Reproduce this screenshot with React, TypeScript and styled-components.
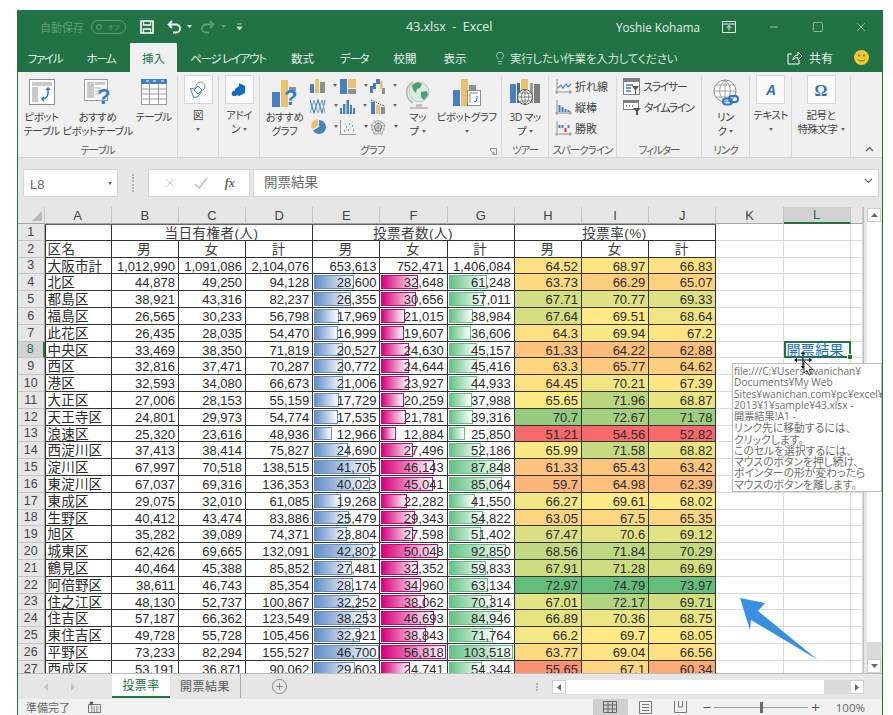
import React from 'react';
import styled, { createGlobalStyle } from 'styled-components';
import { CirclePlus, Lightbulb, Minus, Square, X } from 'lucide-react';

const UI_FONT = `"Open Sans", "Noto Sans CJK JP", sans-serif`;
const CELL_FONT = `"Liberation Sans", "Noto Sans CJK JP", sans-serif`;

const GlobalStyle = createGlobalStyle`
  html, body {
    margin: 0;
    height: 715px;
    overflow: hidden;
    background: #ffffff;
  }
  #root {
    padding: 10px 0 0 17px;
  }
`;

const Excel = styled.div`
  position: relative;
  box-sizing: border-box;
  width: 866px;
  height: 705px;
  display: flex;
  flex-direction: column;
  overflow: hidden;
  background: #e6e6e6;
  border-left: 1px solid #217346;
  border-right: 1px solid #217346;
  font-family: ${UI_FONT};
  font-feature-settings: 'palt';
`;

/* title bar */
const TitleBar = styled.div`
  height: 33px;
  flex: none;
  display: flex;
  align-items: center;
  background: #217346;
  color: #e4efe8;
  font-size: 12px;
`;

const AutoSave = styled.span`
  margin-left: 22px;
  width: 45px;
  color: #5e9f7b;
  font-size: 11px;
  white-space: nowrap;
`;

const Toggle = styled.span`
  box-sizing: border-box;
  margin-left: 6px;
  width: 35px;
  height: 14px;
  padding-left: 4px;
  display: flex;
  align-items: center;
  gap: 5px;
  border: 1px solid #5e9f7b;
  border-radius: 8px;
  color: #5e9f7b;
  font-size: 7px;

  &::before {
    content: '';
    width: 6px;
    height: 6px;
    border-radius: 50%;
    background: #217346;
    border: 1px solid #5e9f7b;
    box-sizing: border-box;
  }
`;

const QuickIcon = styled.svg<{ $left: number }>`
  flex: none;
  margin-left: ${(p) => p.$left}px;
`;

const DocTitle = styled.span`
  position: absolute;
  left: 388px;
  top: 0;
  line-height: 33px;
  white-space: pre;
  font-size: 12.5px;
`;

const UserName = styled.span`
  margin-left: auto;
  white-space: nowrap;
  font-size: 11.7px;
`;

const WinButton = styled.span<{ $left: number }>`
  margin-left: ${(p) => p.$left}px;
  display: flex;
  color: #f2f7f4;
`;

/* tab row */
const TabRow = styled.div`
  height: 29px;
  flex: none;
  display: flex;
  align-items: stretch;
  background: #217346;
  color: #e6f0ea;
  font-size: 11.5px;
`;

const Tab = styled.div<{ $w: number; $active?: boolean; $kana?: boolean }>`
  width: ${(p) => p.$w}px;
  display: flex;
  align-items: center;
  justify-content: center;
  white-space: nowrap;
  letter-spacing: ${(p) => (p.$kana ? '-1.3px' : '0')};
  background: ${(p) => (p.$active ? '#f0f0f0' : 'transparent')};
  color: ${(p) => (p.$active ? '#217346' : 'inherit')};
`;

const TellMe = styled.div`
  margin-left: 11px;
  display: flex;
  align-items: center;
  gap: 3px;
  white-space: nowrap;
  letter-spacing: -0.25px;
  color: #d4e5da;
`;

const Share = styled.div`
  margin-left: auto;
  display: flex;
  align-items: center;
  gap: 6px;
  font-size: 12px;
`;

const Smile = styled.svg`
  margin: auto 13px auto 21px;
`;

/* ribbon */
const Ribbon = styled.div`
  height: 86px;
  flex: none;
  box-sizing: border-box;
  padding-top: 4px;
  display: flex;
  background: #f0f0f0;
  border-bottom: 1px solid #d6d6d6;
  color: #444444;
  font-size: 10.5px;
  line-height: 14px;
`;

const Group = styled.div<{ $w: number }>`
  position: relative;
  box-sizing: border-box;
  width: ${(p) => p.$w}px;
  height: 81px;
  flex: none;
  display: flex;
  flex-direction: column;
  border-right: 1px solid #d9d9d9;
`;

const GroupBody = styled.div`
  height: 67px;
  flex: none;
  display: flex;
  justify-content: center;
`;

const GroupLabel = styled.div<{ $inset?: number }>`
  padding-right: ${(p) => p.$inset ?? 0}px;
  text-align: center;
  color: #5a5a5a;
  white-space: nowrap;
  letter-spacing: -1px;
  line-height: 14px;
`;

const Launcher = styled.svg`
  position: absolute;
  right: 4px;
  bottom: 2px;
`;

const BigButton = styled.div<{ $w?: number }>`
  width: ${(p) => (p.$w ? `${p.$w}px` : '100%')};
  flex: none;
  display: flex;
  flex-direction: column;
  align-items: center;
  text-align: center;
  white-space: nowrap;
  letter-spacing: -0.5px;
`;

const ButtonText = styled.div`
  line-height: 14px;
`;

const IconSlot = styled.div`
  height: 31px;
  padding-top: 3px;
  display: flex;
  align-items: flex-start;
  justify-content: center;
`;

const Boxed = styled.div`
  box-sizing: border-box;
  width: 29px;
  height: 29px;
  margin: -1px 0 4px;
  display: flex;
  align-items: center;
  justify-content: center;
  background: #fbfbfb;
  border: 1px solid #d8d8d8;
`;

const Caret = styled.span<{ $inline?: boolean }>`
  display: ${(p) => (p.$inline ? 'inline-block' : 'block')};
  width: 0;
  height: 0;
  margin: ${(p) => (p.$inline ? '0 0 2px 3px' : '6px 0 0')};
  vertical-align: middle;
  border-left: 2.5px solid transparent;
  border-right: 2.5px solid transparent;
  border-top: 3px solid #666666;
`;

const ChartGrid = styled.div`
  width: 90px;
  flex: none;
  display: grid;
  grid-template-columns: repeat(3, 30px);
  grid-auto-rows: 20.5px;
`;

const ChartCell = styled.div`
  display: flex;
  align-items: center;
  gap: 5px;
`;

const SmallList = styled.div`
  width: 100%;
  padding-left: 6px;
  display: flex;
  flex-direction: column;
`;

const SmallButton = styled.div<{ $kana?: boolean }>`
  height: 21px;
  display: flex;
  align-items: center;
  gap: 3px;
  white-space: nowrap;
  font-size: 11px;
  letter-spacing: ${(p) => (p.$kana ? '-1.4px' : '0')};
`;

const Collapse = styled.svg`
  margin: auto 0 5px 14px;
`;

/* formula bar */
const FormulaBar = styled.div`
  height: 49px;
  flex: none;
  box-sizing: border-box;
  padding: 11px 3px 10px 5px;
  display: flex;
  background: #e6e6e6;
  color: #6a6a6a;
  font-family: ${CELL_FONT};
`;

const NameBox = styled.div`
  box-sizing: border-box;
  width: 95px;
  display: flex;
  align-items: center;
  justify-content: space-between;
  padding: 3px 5px 0 6px;
  background: #ffffff;
  border: 1px solid #d6d6d6;
  font-size: 13px;
`;

const Grip = styled.div`
  width: 30px;
  display: flex;
  flex-direction: column;
  align-items: center;
  justify-content: center;
  gap: 2px;

  &::before,
  &::after {
    content: '';
    width: 2px;
    height: 8px;
    background: repeating-linear-gradient(#b5b5b5 0 2px, transparent 2px 3px);
  }
`;

const FxBox = styled.div`
  box-sizing: border-box;
  width: 102px;
  display: flex;
  align-items: center;
  justify-content: space-around;
  padding: 0 6px;
  background: #ffffff;
  border: 1px solid #d6d6d6;
`;

const FxText = styled.span`
  font-family: 'Liberation Serif', serif;
  font-style: italic;
  font-weight: bold;
  font-size: 12px;
  color: #666666;
`;

const FormulaInput = styled.div`
  box-sizing: border-box;
  flex: 1;
  margin-left: 3px;
  padding: 0 5px 4px 10px;
  display: flex;
  align-items: center;
  justify-content: space-between;
  background: #ffffff;
  border: 1px solid #d6d6d6;
  font-size: 13.5px;
`;

/* sheet */
const SheetRow = styled.div`
  height: 466px;
  flex: none;
  display: flex;
`;

const Sheet = styled.div`
  flex: 1;
  min-width: 0;
  overflow: hidden;
  display: grid;
  grid-template-columns: 26.5px repeat(12, 67.2px) 1fr;
  grid-template-rows: 17px;
  grid-auto-rows: 16.8px;
  background: #ffffff;
  border-right: 1px solid #bdbdbd;
  font-family: ${CELL_FONT};
  font-feature-settings: normal;
  font-size: 13px;
  color: #2b2b2b;
`;

const Corner = styled.div`
  display: flex;
  align-items: flex-end;
  justify-content: flex-end;
  padding: 0 2px 2px 0;
  background: #e6e6e6;
  border-right: 1px solid #c6c6c6;
  border-bottom: 1px solid #a6a6a6;

  &::after {
    content: '';
    border-left: 10px solid transparent;
    border-bottom: 10px solid #b8b8b8;
  }
`;

const ColHead = styled.div<{ $on?: boolean }>`
  box-sizing: border-box;
  display: flex;
  align-items: center;
  justify-content: center;
  background: ${(p) => (p.$on ? '#d2d2d2' : '#e6e6e6')};
  color: ${(p) => (p.$on ? '#217346' : '#444444')};
  border-right: 1px solid #c6c6c6;
  border-bottom: ${(p) => (p.$on ? '2px solid #217346' : '1px solid #a6a6a6')};
`;

const RowHead = styled.div<{ $on?: boolean }>`
  box-sizing: border-box;
  display: flex;
  align-items: center;
  justify-content: center;
  font-size: 12.5px;
  background: ${(p) => (p.$on ? '#d2d2d2' : '#e6e6e6')};
  color: ${(p) => (p.$on ? '#217346' : '#444444')};
  border-bottom: 1px solid #c6c6c6;
  border-right: ${(p) => (p.$on ? '2px solid #217346' : '1px solid #a6a6a6')};
`;

const Cell = styled.div<{ $span?: number; $first?: boolean; $top?: boolean; $right?: boolean; $center?: boolean }>`
  position: relative;
  box-sizing: border-box;
  grid-column: span ${(p) => p.$span ?? 1};
  padding: 1px 3px 0 2px;
  line-height: 15px;
  white-space: nowrap;
  text-align: ${(p) => (p.$center ? 'center' : p.$right ? 'right' : 'left')};
  border-right: 1px solid #333333;
  border-bottom: 1px solid #333333;
  border-left: ${(p) => (p.$first ? '1px solid #333333' : 'none')};
  border-top: ${(p) => (p.$top ? '1px solid #666666' : 'none')};
`;

const NameCell = styled(Cell)`
  font-size: 13.5px;
  letter-spacing: 0.2px;
`;

const HeadCell = styled(Cell)`
  font-size: 13.5px;
  letter-spacing: 0.5px;
  color: #3c3c3c;
`;

const BarCell = styled(Cell)`
  overflow: hidden;
`;

const BarFill = styled.span<{ $color: string }>`
  position: absolute;
  left: 1px;
  top: 1px;
  bottom: 1px;
  box-sizing: border-box;
  border: 1px solid ${(p) => p.$color};
  background: linear-gradient(to right, ${(p) => p.$color}, #ffffff);
`;

const BarText = styled.span`
  position: relative;
`;

const Blank = styled.div`
  position: relative;
  box-sizing: border-box;
  border-right: 1px solid #dcdcdc;
  border-bottom: 1px solid #dcdcdc;
`;

const Selected = styled.div`
  box-sizing: border-box;
  position: relative;
  z-index: 1;
  padding: 0 0 0 1px;
  border: 2px solid #217346;
  margin-top: -1px;
  line-height: 14px;
  font-size: 14px;
  letter-spacing: 0.3px;
  color: #1f6fc4;
  white-space: nowrap;

  &::after {
    content: '';
    position: absolute;
    right: -4px;
    bottom: -4px;
    width: 6px;
    height: 6px;
    background: #217346;
    border: 1px solid #ffffff;
    box-sizing: border-box;
  }
`;

const VScroll = styled.div`
  width: 18px;
  flex: none;
  box-sizing: border-box;
  padding: 1px 1px 0 3px;
  display: flex;
  flex-direction: column;
  background: #e6e6e6;
`;

const ScrollCap = styled.div`
  height: 14px;
  flex: none;
  box-sizing: border-box;
  display: flex;
  align-items: center;
  justify-content: center;
  background: #ffffff;
  border: 1px solid #cfcfcf;
`;

const ScrollThumb = styled.div`
  height: 420px;
  flex: none;
  background: #ffffff;
`;

const ScrollTrack = styled.div`
  flex: 1;
  background: #dadada;
`;

/* sheet tabs and the horizontal scroll bar */
const TabStrip = styled.div`
  height: 26px;
  flex: none;
  box-sizing: border-box;
  display: flex;
  background: #e6e6e6;
  border-top: 1px solid #bdbdbd;
  color: #5a5a5a;
  font-size: 12px;
`;

const SheetNav = styled.div`
  width: 94px;
  flex: none;
  padding-left: 26px;
  box-sizing: border-box;
  display: flex;
  align-items: center;
  gap: 23px;
`;

const NavArrow = styled.span<{ $dir: 'left' | 'right' }>`
  width: 0;
  height: 0;
  border-top: 4px solid transparent;
  border-bottom: 4px solid transparent;
  ${(p) => (p.$dir === 'left' ? 'border-right: 4px solid #c2c2c2;' : 'border-left: 4px solid #c2c2c2;')}
`;

const SheetTab = styled.div<{ $w: number; $active?: boolean }>`
  width: ${(p) => p.$w}px;
  flex: none;
  box-sizing: border-box;
  height: 24px;
  display: flex;
  align-items: center;
  justify-content: center;
  letter-spacing: 0.5px;
  background: ${(p) => (p.$active ? '#ffffff' : 'transparent')};
  color: ${(p) => (p.$active ? '#217346' : 'inherit')};
  border-bottom: ${(p) => (p.$active ? '2px solid #217346' : 'none')};
  border-right: ${(p) => (p.$active ? 'none' : '1px solid #a9a9a9')};
`;

const AddSheet = styled.div`
  margin-left: 30px;
  display: flex;
  align-items: center;
  color: #7a7a7a;
`;

const HScrollArea = styled.div`
  margin: 6px 18px 0 auto;
  height: 14px;
  display: flex;
  align-items: center;
`;

const HGrip = styled.div`
  width: 2px;
  height: 9px;
  margin-right: 14px;
  background: repeating-linear-gradient(#b5b5b5 0 2px, transparent 2px 3px);
`;

const HCap = styled(ScrollCap)`
  width: 14px;
`;

const HThumb = styled.div`
  width: 258px;
  height: 14px;
  background: #ffffff;
`;

const HTrack = styled.div`
  width: 26px;
  height: 14px;
  background: #dadada;
`;

/* status bar */
const StatusBar = styled.div`
  flex: 1;
  display: flex;
  align-items: center;
  background: #f1f1f1;
  color: #666666;
  font-size: 11px;
`;

const StatusText = styled.span`
  margin-left: 8px;
  width: 62px;
  white-space: nowrap;
`;

const ViewButton = styled.div<{ $on?: boolean; $first?: boolean }>`
  width: 35px;
  height: 16px;
  margin-left: ${(p) => (p.$first ? 'auto' : '0')};
  display: flex;
  align-items: center;
  justify-content: center;
  background: ${(p) => (p.$on ? '#d0d0d0' : 'transparent')};
`;

const Zoomer = styled.div`
  margin-left: 5px;
  display: flex;
  align-items: center;
  gap: 3px;
  color: #555555;
  font-size: 15px;
  line-height: 14px;
`;

const ZoomLine = styled.div`
  position: relative;
  width: 94px;
  height: 1px;
  background: #9a9a9a;

  &::after {
    content: '';
    position: absolute;
    left: 46px;
    top: -5px;
    width: 3px;
    height: 11px;
    background: #6a6a6a;
  }
`;

const ZoomValue = styled.span`
  margin: 0 17px 0 16px;
  font-size: 11.5px;
`;

/* things that float over the sheet */
const Tooltip = styled.div`
  position: absolute;
  left: 714px;
  top: 353px;
  width: 150px;
  height: 129px;
  box-sizing: border-box;
  padding: 2px 0 0 1px;
  background: #ffffff;
  border: 1px solid #bdbdbd;
  color: #6f6f6f;
  font-size: 10.2px;
  line-height: 11.25px;
  white-space: pre;
`;

const TooltipKana = styled.div`
  font-family: 'Noto Sans CJK JP', sans-serif;
  font-size: 10.8px;
  line-height: 11.25px;
`;

const Overlay = styled.svg`
  position: absolute;
  left: 0;
  top: 0;
  pointer-events: none;
`;

const QMark = styled.text`
  font-family: 'Liberation Sans', sans-serif;
  font-weight: bold;
  fill: #2b7cd3;
`;

const BLUE = '#4a7fbd';
const ORANGE = '#ecc16e';
const GRAY = '#8f8f8f';

function Icon({ w = 26, h = 26, children }: { w?: number; h?: number; children: React.ReactNode }) {
  return (
    <svg width={w} height={h} viewBox={`0 0 ${w} ${h}`}>
      {children}
    </svg>
  );
}

const PivotIcon = () => (
  <Icon>
    <rect x=".5" y=".5" width="25" height="25" fill="#fff" stroke="#8c8c8c" />
    <rect x="3" y="3" width="20" height="4" fill="#c9c9c9" />
    <rect x="3" y="8" width="6" height="15" fill="#c9c9c9" />
    <path d="M19 9v5a6 6 0 0 1-6 6M17 11l2-2 2 2M15 18l-2 2 2 2" fill="none" stroke="#2b79c2" strokeWidth="1.4" />
  </Icon>
);

const RecommendPivotIcon = () => (
  <Icon w={28} h={31}>
    <rect x=".5" y=".5" width="23" height="21" fill="#fff" stroke="#9a9a9a" />
    <rect x="3" y="3" width="7" height="16" fill="#c9c9c9" />
    <rect x="11" y="3" width="10" height="3" fill="#c9c9c9" />
    <path d="M11 9h6M11 12h5M11 15h5" stroke="#c9c9c9" strokeWidth="1.5" />
    <QMark x="13" y="25" fontSize="22">?</QMark>
  </Icon>
);

const TableIcon = () => (
  <Icon>
    <rect x=".5" y=".5" width="25" height="25" fill="#fff" stroke="#9a9a9a" />
    <rect x="0" y="0" width="26" height="5" fill="#3f7fc4" />
    <path d="M5 2h3M12 2h3M20 2h3" stroke="#fff" strokeWidth="1.2" />
    <path d="M0 10h26M0 15h26M0 20h26M8.500 5v21M17.500 5v21" stroke="#9a9a9a" />
  </Icon>
);

const PictureIcon = () => (
  <Icon w={17} h={17}>
    <path d="M1 7h7l3 5-4 4H3z" fill="none" stroke="#4a8fd4" strokeWidth="1.1" transform="rotate(-8 6 11)" />
    <circle cx="10.500" cy="5.500" r="4.500" fill="#fff" stroke="#8a8a8a" />
    <path d="M4 9l4-4 4 4-4 4z" fill="#fff" stroke="#3f86cf" />
  </Icon>
);

const AddinIcon = () => (
  <Icon w={16} h={16}>
    <path d="M8 1l6 3v7l-6 3-4-2V7l4-3z" fill="#0f6cbd" />
    <circle cx="3.500" cy="11.500" r="2.800" fill="#0f6cbd" />
  </Icon>
);

const RecommendChartIcon = () => (
  <Icon w={28} h={31}>
    <rect x="1" y="13" width="8" height="15" fill={BLUE} />
    <rect x="10" y="1" width="7" height="27" fill={ORANGE} />
    <rect x="18" y="8" width="7" height="4" fill={GRAY} />
    <QMark x="13" y="26" fontSize="22">?</QMark>
  </Icon>
);

const BarsIcon = () => (
  <Icon w={15} h={14}>
    <rect x="0" y="5" width="4" height="9" fill={BLUE} />
    <rect x="5" y="0" width="4" height="14" fill={ORANGE} />
    <rect x="10" y="3" width="5" height="11" fill={GRAY} />
  </Icon>
);

const TreemapIcon = () => (
  <Icon w={16} h={15}>
    <rect x="0" y="0" width="7" height="15" fill={BLUE} />
    <rect x="8" y="0" width="8" height="9" fill={ORANGE} />
    <rect x="8" y="10" width="8" height="5" fill={GRAY} />
  </Icon>
);

const WaterfallIcon = () => (
  <Icon w={15} h={15}>
    <rect x="0" y="7" width="3" height="7" fill={BLUE} />
    <rect x="3" y="4" width="3" height="6" fill={BLUE} />
    <rect x="6" y="0" width="4" height="5" fill={BLUE} />
    <rect x="10" y="2" width="2.500" height="8" fill={ORANGE} />
    <rect x="12" y="9" width="3" height="6" fill={GRAY} />
  </Icon>
);

const StockIcon = () => (
  <Icon w={16} h={15}>
    <path d="M0 1l4 13 4-13 4 13 3-13" fill="none" stroke={BLUE} strokeWidth="1.100" />
    <path d="M0 14l4-13 4 13 4-13 3 13" fill="none" stroke="#6ea5da" strokeWidth="1" />
  </Icon>
);

const HistogramIcon = () => (
  <Icon w={15} h={14}>
    <rect x="0" y="8" width="2" height="6" fill={BLUE} />
    <rect x="3" y="4" width="2.500" height="10" fill={BLUE} />
    <rect x="6.500" y="0" width="2.500" height="14" fill={BLUE} />
    <rect x="10" y="5" width="2" height="9" fill={BLUE} />
    <rect x="13" y="8" width="2" height="6" fill={BLUE} />
  </Icon>
);

const ComboIcon = () => (
  <Icon w={15} h={15}>
    <rect x="1" y="3" width="4" height="12" fill={BLUE} />
    <rect x="6" y="6" width="4" height="9" fill={ORANGE} />
    <rect x="11" y="8" width="4" height="7" fill={GRAY} />
    <path d="M1 1l5 2 5 3 4 1" fill="none" stroke="#555" strokeWidth="1" strokeDasharray="1.500 1" />
  </Icon>
);

const PieIcon = () => (
  <Icon w={16} h={16}>
    <path d="M9 1a7 7 0 0 1 0 14 7 7 0 0 1-6-3.500L9 8z" fill={BLUE} />
    <path d="M8 0v7L2 10a7 7 0 0 1 6-10z" fill={ORANGE} />
  </Icon>
);

const ScatterIcon = () => (
  <Icon w={16} h={15}>
    <path d="M.500 0v14.500H16" fill="none" stroke="#9a9a9a" />
    <path d="M4 11h1M6 7h1M8 10h1M9 4h1M12 6h1M13 10h1" stroke="#4a8fd4" strokeWidth="1.500" />
    <path d="M5 4h1M10 8h1M12 2h1" stroke={ORANGE} strokeWidth="1.500" />
  </Icon>
);

const RadarIcon = () => (
  <Icon w={16} h={15}>
    <path d="M8 0l7 5-3 9H4L1 5zM8 0v14M1 5l14 5M15 5L1 10M4 14l8-14M12 14L4 0" fill="none" stroke="#9a9a9a" strokeWidth=".8" />
    <path d="M8 3l4 3-2 5H6L4 6z" fill="none" stroke="#777" strokeWidth="1" />
  </Icon>
);

const MapIcon = () => (
  <Icon w={24} h={31}>
    <path d="M7 3a12 12 0 0 0 0 21" fill="none" stroke="#b5b5b5" strokeWidth="1.600" />
    <circle cx="13" cy="13" r="10" fill="#d6ebe3" stroke="#c4c4c4" />
    <path d="M6 6l6-3 4 2-2 4-3 1-1 4-3-3zM15 13l6-1 1 4-4 5-3-3z" fill="#4f9c74" />
    <path d="M10 25h6v3h-6zM4 28h18v2H4z" fill="#c2c2c2" />
  </Icon>
);

const PivotChartIcon = () => (
  <Icon w={28} h={28}>
    <rect x="0" y="11" width="7" height="16" fill={BLUE} />
    <rect x="8" y="0" width="7" height="27" fill={ORANGE} />
    <rect x="16" y="6" width="7" height="5" fill={GRAY} />
    <rect x="14.500" y="11.500" width="13" height="15" fill="#fff" stroke="#8c8c8c" />
    <path d="M17 14h8M17 14v10" stroke="#c2c2c2" strokeWidth="2" />
    <path d="M24 17v3a3 3 0 0 1-3 3" fill="none" stroke="#2b79c2" />
  </Icon>
);

const Map3dIcon = () => (
  <Icon w={30} h={28}>
    <rect x="0" y="5" width="6" height="19" fill={BLUE} />
    <rect x="7" y="4" width="3" height="20" fill="#3b6ca6" />
    <rect x="11" y="0" width="7" height="15" fill={ORANGE} />
    <rect x="20" y="4" width="3" height="20" fill="#9a9a9a" />
    <rect x="24" y="5" width="6" height="19" fill="#7e7e7e" />
    <circle cx="15" cy="18" r="7.500" fill="#fff" stroke="#555" />
    <path d="M8 18h14M15 11v14M10 14h10M10 22h10M15 11c-5 4-5 10 0 14M15 11c5 4 5 10 0 14" fill="none" stroke="#555" strokeWidth=".7" />
  </Icon>
);

const SparkAxes = () => (
  <path d="M2 0v15M0 13h17M15 11v4" fill="none" stroke="#8f8f8f" />
);

const SparkLineIcon = () => (
  <Icon w={17} h={15}>
    <SparkAxes />
    <path d="M3 9l3-3 2 3 3-4 2 3 3-3" fill="none" stroke={BLUE} strokeWidth="1.100" />
  </Icon>
);

const SparkColumnIcon = () => (
  <Icon w={17} h={15}>
    <SparkAxes />
    <path d="M4.500 12V5M7.500 12V7M10.500 12V9M13.500 12v-2" stroke={BLUE} strokeWidth="2" />
  </Icon>
);

const SparkWinIcon = () => (
  <Icon w={17} h={15}>
    <SparkAxes />
    <path d="M4.500 4v3M7.500 4v3M13.500 4v3" stroke={BLUE} strokeWidth="2" />
    <path d="M10.500 7v4" stroke="#d6402f" strokeWidth="2" />
  </Icon>
);

const SlicerIcon = () => (
  <Icon w={17} h={17}>
    <rect x=".5" y=".5" width="16" height="16" fill="#fff" stroke="#7f7f7f" />
    <rect x="1" y="1" width="15" height="3" fill="#7f7f7f" />
    <path d="M3 7h7M3 10h5M3 13h5" stroke={BLUE} strokeWidth="1.500" />
    <path d="M9 8h7l-3 4v4h-1v-4z" fill="#555" />
  </Icon>
);

const TimelineIcon = () => (
  <Icon w={18} h={15}>
    <rect x=".5" y=".5" width="15" height="9" fill="#fff" stroke="#7f7f7f" />
    <rect x="1" y="1" width="14" height="2" fill="#7f7f7f" />
    <path d="M3 6h1M6 6h1M9 6h1" stroke={BLUE} strokeWidth="1.500" />
    <path d="M10 8h8l-3 3v4h-2v-4z" fill="#555" />
  </Icon>
);

const LinkIcon = () => (
  <Icon w={26} h={31}>
    <circle cx="12" cy="12" r="11" fill="#fff" stroke="#8f8f8f" />
    <path d="M1 12h22M12 1v22M3 6h18M3 18h18M12 1c-7 6-7 16 0 22M12 1c7 6 7 16 0 22" fill="none" stroke="#8f8f8f" strokeWidth=".8" />
    <rect x="10" y="19.500" width="9" height="6" rx="3" fill="none" stroke="#2b79c2" strokeWidth="2" />
    <rect x="16" y="17" width="9" height="6" rx="3" fill="none" stroke="#2b79c2" strokeWidth="2" />
  </Icon>
);

const TextAIcon = () => (
  <Icon w={16} h={16}>
    <text x="3" y="13" fontFamily="Liberation Sans, sans-serif" fontSize="14" fontWeight="bold" fontStyle="italic" fill="#2f73b8">A</text>
  </Icon>
);

const OmegaIcon = () => (
  <Icon w={16} h={16}>
    <text x="1.500" y="13.500" fontFamily="Liberation Serif, serif" fontSize="16" fontWeight="bold" fill="#2f73b8">Ω</text>
  </Icon>
);

type ChartRow = { icon: React.ReactNode };

const CHART_ICONS: ChartRow[] = [
  { icon: <BarsIcon /> },
  { icon: <TreemapIcon /> },
  { icon: <WaterfallIcon /> },
  { icon: <StockIcon /> },
  { icon: <HistogramIcon /> },
  { icon: <ComboIcon /> },
  { icon: <PieIcon /> },
  { icon: <ScatterIcon /> },
  { icon: <RadarIcon /> },
];

// 区名, 男, 女, 計, 投票者 男, 女, 計, 投票率 男, 女, 計
const ROWS: [string, string, string, string, string, string, string, number, number, number][] = [
  ['大阪市計', '1,012,990', '1,091,086', '2,104,076', '653,613', '752,471', '1,406,084', 64.52, 68.97, 66.83],
  ['北区', '44,878', '49,250', '94,128', '28,600', '32,648', '61,248', 63.73, 66.29, 65.07],
  ['都島区', '38,921', '43,316', '82,237', '26,355', '30,656', '57,011', 67.71, 70.77, 69.33],
  ['福島区', '26,565', '30,233', '56,798', '17,969', '21,015', '38,984', 67.64, 69.51, 68.64],
  ['此花区', '26,435', '28,035', '54,470', '16,999', '19,607', '36,606', 64.3, 69.94, 67.2],
  ['中央区', '33,469', '38,350', '71,819', '20,527', '24,630', '45,157', 61.33, 64.22, 62.88],
  ['西区', '32,816', '37,471', '70,287', '20,772', '24,644', '45,416', 63.3, 65.77, 64.62],
  ['港区', '32,593', '34,080', '66,673', '21,006', '23,927', '44,933', 64.45, 70.21, 67.39],
  ['大正区', '27,006', '28,153', '55,159', '17,729', '20,259', '37,988', 65.65, 71.96, 68.87],
  ['天王寺区', '24,801', '29,973', '54,774', '17,535', '21,781', '39,316', 70.7, 72.67, 71.78],
  ['浪速区', '25,320', '23,616', '48,936', '12,966', '12,884', '25,850', 51.21, 54.56, 52.82],
  ['西淀川区', '37,413', '38,414', '75,827', '24,690', '27,496', '52,186', 65.99, 71.58, 68.82],
  ['淀川区', '67,997', '70,518', '138,515', '41,705', '46,143', '87,848', 61.33, 65.43, 63.42],
  ['東淀川区', '67,037', '69,316', '136,353', '40,023', '45,041', '85,064', 59.7, 64.98, 62.39],
  ['東成区', '29,075', '32,010', '61,085', '19,268', '22,282', '41,550', 66.27, 69.61, 68.02],
  ['生野区', '40,412', '43,474', '83,886', '25,479', '29,343', '54,822', 63.05, 67.5, 65.35],
  ['旭区', '35,282', '39,089', '74,371', '23,804', '27,598', '51,402', 67.47, 70.6, 69.12],
  ['城東区', '62,426', '69,665', '132,091', '42,802', '50,048', '92,850', 68.56, 71.84, 70.29],
  ['鶴見区', '40,464', '45,388', '85,852', '27,481', '32,352', '59,833', 67.91, 71.28, 69.69],
  ['阿倍野区', '38,611', '46,743', '85,354', '28,174', '34,960', '63,134', 72.97, 74.79, 73.97],
  ['住之江区', '48,130', '52,737', '100,867', '32,252', '38,062', '70,314', 67.01, 72.17, 69.71],
  ['住吉区', '57,187', '66,362', '123,549', '38,253', '46,693', '84,946', 66.89, 70.36, 68.75],
  ['東住吉区', '49,728', '55,728', '105,456', '32,921', '38,843', '71,764', 66.2, 69.7, 68.05],
  ['平野区', '73,233', '82,294', '155,527', '46,700', '56,818', '103,518', 63.77, 69.04, 66.56],
  ['西成区', '53,191', '36,871', '90,062', '29,603', '24,741', '54,344', 55.65, 67.1, 60.34],
];

const COLUMNS = ['A', 'B', 'C', 'D', 'E', 'F', 'G', 'H', 'I', 'J', 'K', 'L', 'M'];
const BAR_COLORS = ['#638ec6', '#d6007b', '#63c384'];
const BAR_FULL = 64.5;

const TOOLTIP_PATH = [
  'file:///C:¥Users¥wanichan¥',
  'Documents¥My Web',
  'Sites¥wanichan.com¥pc¥excel¥',
  '2013¥1¥sample¥43.xlsx -',
  '開票結果!A1 -',
].join('\n');

const TOOLTIP_HINT = [
  'リンク先に移動するには、',
  'クリックします。',
  'このセルを選択するには、',
  'マウスのボタンを押し続け、',
  'ポインターの形が変わったら',
  'マウスのボタンを離します。',
].join('\n');

const num = (s: string) => Number(s.replace(/,/g, ''));

function mix(a: number[], b: number[], t: number): string {
  return `rgb(${a.map((v, i) => Math.round(v + (b[i] - v) * t)).join(',')})`;
}

// Excel's red / yellow / green scale, one per column, pivoted on the median
function scaleColor(value: number, column: number[]): string {
  const sorted = [...column].sort((x, y) => x - y);
  const low = sorted[0];
  const high = sorted[sorted.length - 1];
  const mid = sorted[Math.floor(sorted.length / 2)];
  const red = [248, 105, 107];
  const yellow = [255, 235, 132];
  const green = [99, 190, 123];
  if (value <= mid) return mix(red, yellow, (value - low) / (mid - low));
  return mix(yellow, green, (value - mid) / (high - mid));
}

const RATE_COLUMNS = [7, 8, 9].map((i) => ROWS.map((r) => r[i] as number));
const BAR_MAX = [4, 5, 6].map((i) => Math.max(...ROWS.slice(1).map((r) => num(r[i] as string))));

function TrailingBlanks({ selected }: { selected?: boolean }) {
  return (
    <>
      <Blank />
      {selected ? <Selected>開票結果</Selected> : <Blank />}
      <Blank />
    </>
  );
}

function DataRows() {
  return (
    <>
      {ROWS.map((row, r) => {
        const rowNumber = r + 3;
        return (
          <React.Fragment key={rowNumber}>
            <RowHead $on={rowNumber === 8}>{rowNumber}</RowHead>
            <NameCell $first>{row[0]}</NameCell>
            {row.slice(1, 4).map((v, i) => (
              <Cell $right key={i}>{v}</Cell>
            ))}
            {row.slice(4, 7).map((v, i) => (
              <BarCell $right key={i}>
                {r > 0 && (
                  <BarFill
                    $color={BAR_COLORS[i]}
                    style={{ width: (num(v as string) / BAR_MAX[i]) * BAR_FULL }}
                  />
                )}
                <BarText>{v}</BarText>
              </BarCell>
            ))}
            {row.slice(7).map((v, i) => (
              <Cell
                $right
                key={i}
                style={{ background: scaleColor(v as number, RATE_COLUMNS[i]) }}
              >
                {v}
              </Cell>
            ))}
            <TrailingBlanks selected={rowNumber === 8} />
          </React.Fragment>
        );
      })}
    </>
  );
}

export default function App(): JSX.Element {
  return (
    <>
      <GlobalStyle />
      <Excel>
        <TitleBar>
          <AutoSave>自動保存</AutoSave>
          <Toggle>オフ</Toggle>
          <QuickIcon $left={14} width="14" height="14" viewBox="0 0 14 14">
            <path d="M1 1h12v12H1z" fill="none" stroke="#fff" strokeWidth="1.600" />
            <path d="M3.500 1v4h7V1M3.500 13V9h7v4" fill="none" stroke="#fff" strokeWidth="1.300" />
          </QuickIcon>
          <QuickIcon $left={13} width="15" height="14" viewBox="0 0 15 14">
            <path d="M5 1L1.500 4.500 5 8M1.500 4.500H9a4 4 0 0 1 0 8H6" fill="none" stroke="#fff" strokeWidth="1.800" />
          </QuickIcon>
          <QuickIcon $left={4} width="7" height="4" viewBox="0 0 7 4">
            <path d="M1 0h5L3.500 3z" fill="#e8f1ec" />
          </QuickIcon>
          <QuickIcon $left={7} width="15" height="14" viewBox="0 0 15 14">
            <path d="M10 1l3.500 3.500L10 8M13.500 4.500H6a4 4 0 0 0 0 8h3" fill="none" stroke="#5e9f7b" strokeWidth="1.800" />
          </QuickIcon>
          <QuickIcon $left={5} width="7" height="4" viewBox="0 0 7 4">
            <path d="M1 0h5L3.500 3z" fill="#5e9f7b" />
          </QuickIcon>
          <QuickIcon $left={9} width="7" height="8" viewBox="0 0 7 8">
            <path d="M1 1h5M1 4h5L3.500 7z" fill="#e8f1ec" stroke="#e8f1ec" strokeWidth=".7" />
          </QuickIcon>
          <DocTitle>43.xlsx  -  Excel</DocTitle>
          <UserName>Yoshie Kohama</UserName>
          <QuickIcon $left={22} width="14" height="12" viewBox="0 0 14 12">
            <path d="M.5.5h13v11H.5zM.5 3h13M7 9.500V4.500M4.500 7L7 4.500 9.500 7" fill="none" stroke="#e8f1ec" />
          </QuickIcon>
          <WinButton $left={32}><Minus size={12} strokeWidth={1.2} /></WinButton>
          <WinButton $left={32}><Square size={12} strokeWidth={1} /></WinButton>
          <WinButton $left={30}><X size={14} strokeWidth={1} /></WinButton>
          <WinButton $left={14} />
        </TitleBar>

        <TabRow>
          <Tab $w={54} $kana>ファイル</Tab>
          <Tab $w={58} $kana>ホーム</Tab>
          <Tab $w={47} $active>挿入</Tab>
          <Tab $w={102} $kana>ページ レイアウト</Tab>
          <Tab $w={47}>数式</Tab>
          <Tab $w={56} $kana>データ</Tab>
          <Tab $w={46}>校閲</Tab>
          <Tab $w={54}>表示</Tab>
          <TellMe>
            <Lightbulb size={14} strokeWidth={1.2} />
            実行したい作業を入力してください
          </TellMe>
          <Share>
            <svg width="16" height="14" viewBox="0 0 16 14">
              <path d="M5 3H1v10h11V9M6 9c0-3 2-5 5-5V1l4 4-4 4V6.500C9 6.500 7 7 6 9z" fill="none" stroke="#fff" />
            </svg>
            共有
          </Share>
          <Smile width="15" height="15" viewBox="0 0 15 15">
            <circle cx="7.500" cy="7.500" r="7.500" fill="#f7c92e" />
            <circle cx="5" cy="5.500" r="1" fill="#6b5a10" />
            <circle cx="10" cy="5.500" r="1" fill="#6b5a10" />
            <path d="M4 9.500c1.500 2 5.500 2 7 0" fill="none" stroke="#6b5a10" />
          </Smile>
        </TabRow>

        <Ribbon>
          <Group $w={160}>
            <GroupBody>
              <BigButton $w={46}>
                <IconSlot><PivotIcon /></IconSlot>
                <ButtonText>ピボット<br />テーブル</ButtonText>
              </BigButton>
              <BigButton $w={66}>
                <IconSlot><RecommendPivotIcon /></IconSlot>
                <ButtonText>おすすめ<br />ピボットテーブル</ButtonText>
              </BigButton>
              <BigButton $w={46}>
                <IconSlot><TableIcon /></IconSlot>
                <ButtonText>テーブル</ButtonText>
              </BigButton>
            </GroupBody>
            <GroupLabel>テーブル</GroupLabel>
          </Group>

          <Group $w={41}>
            <GroupBody>
              <BigButton>
                <Boxed><PictureIcon /></Boxed>
                <ButtonText>図</ButtonText>
                <Caret />
              </BigButton>
            </GroupBody>
          </Group>

          <Group $w={41}>
            <GroupBody>
              <BigButton>
                <Boxed><AddinIcon /></Boxed>
                <ButtonText>アドイ<br />ン<Caret $inline /></ButtonText>
              </BigButton>
            </GroupBody>
          </Group>

          <Group $w={242}>
            <GroupBody>
              <BigButton $w={50}>
                <IconSlot><RecommendChartIcon /></IconSlot>
                <ButtonText>おすすめ<br />グラフ</ButtonText>
              </BigButton>
              <ChartGrid>
                {CHART_ICONS.map((c, i) => (
                  <ChartCell key={i}>
                    {c.icon}
                    <Caret $inline />
                  </ChartCell>
                ))}
              </ChartGrid>
              <BigButton $w={36}>
                <IconSlot><MapIcon /></IconSlot>
                <ButtonText>マッ<br />プ<Caret $inline /></ButtonText>
              </BigButton>
              <BigButton $w={62}>
                <IconSlot><PivotChartIcon /></IconSlot>
                <ButtonText>ピボットグラフ</ButtonText>
                <Caret />
              </BigButton>
              <BigButton $w={4} />
            </GroupBody>
            <GroupLabel $inset={16}>グラフ</GroupLabel>
            <Launcher width="7" height="7" viewBox="0 0 7 7">
              <path d="M.5 3V.5H6.500V6.500H3.500M1 3l3 3M2 6h2V4" fill="none" stroke="#7f7f7f" strokeWidth=".8" />
            </Launcher>
          </Group>

          <Group $w={47}>
            <GroupBody>
              <BigButton>
                <IconSlot><Map3dIcon /></IconSlot>
                <ButtonText>3D マッ<br />プ<Caret $inline /></ButtonText>
              </BigButton>
            </GroupBody>
            <GroupLabel>ツアー</GroupLabel>
          </Group>

          <Group $w={68}>
            <GroupBody>
              <SmallList>
                <SmallButton><SparkLineIcon />折れ線</SmallButton>
                <SmallButton><SparkColumnIcon />縦棒</SmallButton>
                <SmallButton><SparkWinIcon />勝敗</SmallButton>
              </SmallList>
            </GroupBody>
            <GroupLabel>スパークライン</GroupLabel>
          </Group>

          <Group $w={85}>
            <GroupBody>
              <SmallList>
                <SmallButton $kana><SlicerIcon />スライサー</SmallButton>
                <SmallButton $kana><TimelineIcon />タイムライン</SmallButton>
              </SmallList>
            </GroupBody>
            <GroupLabel>フィルター</GroupLabel>
          </Group>

          <Group $w={48}>
            <GroupBody>
              <BigButton>
                <IconSlot><LinkIcon /></IconSlot>
                <ButtonText>リン<br />ク<Caret $inline /></ButtonText>
              </BigButton>
            </GroupBody>
            <GroupLabel>リンク</GroupLabel>
          </Group>

          <Group $w={42}>
            <GroupBody>
              <BigButton>
                <Boxed><TextAIcon /></Boxed>
                <ButtonText>テキスト</ButtonText>
                <Caret />
              </BigButton>
            </GroupBody>
          </Group>

          <Group $w={59}>
            <GroupBody>
              <BigButton>
                <Boxed><OmegaIcon /></Boxed>
                <ButtonText>記号と<br />特殊文字<Caret $inline /></ButtonText>
              </BigButton>
            </GroupBody>
          </Group>

          <Collapse width="9" height="6" viewBox="0 0 9 6">
            <path d="M1 5l3.500-3.500L8 5" fill="none" stroke="#666" strokeWidth="1.300" />
          </Collapse>
        </Ribbon>

        <FormulaBar>
          <NameBox>
            L8
            <Caret $inline />
          </NameBox>
          <Grip />
          <FxBox>
            <X size={14} strokeWidth={1.5} color="#c4c4c4" />
            <svg width="14" height="12" viewBox="0 0 14 12">
              <path d="M1 7l4 4 8-10" fill="none" stroke="#c4c4c4" strokeWidth="1.600" />
            </svg>
            <FxText>fx</FxText>
          </FxBox>
          <FormulaInput>
            開票結果
            <svg width="9" height="6" viewBox="0 0 9 6">
              <path d="M1 1l3.500 3.500L8 1" fill="none" stroke="#666" strokeWidth="1.200" />
            </svg>
          </FormulaInput>
        </FormulaBar>

        <SheetRow>
          <Sheet>
            <Corner />
            {COLUMNS.map((c) => (
              <ColHead key={c} $on={c === 'L'}>{c === 'M' ? '' : c}</ColHead>
            ))}

            <RowHead>1</RowHead>
            <HeadCell $first $top />
            <HeadCell $span={3} $top $center>当日有権者(人)</HeadCell>
            <HeadCell $span={3} $top $center>投票者数(人)</HeadCell>
            <HeadCell $span={3} $top $center>投票率(%)</HeadCell>
            <TrailingBlanks />

            <RowHead>2</RowHead>
            <HeadCell $first>区名</HeadCell>
            {['男', '女', '計', '男', '女', '計', '男', '女', '計'].map((t, i) => (
              <HeadCell $center key={i}>{t}</HeadCell>
            ))}
            <TrailingBlanks />

            <DataRows />
          </Sheet>
          <VScroll>
            <ScrollCap>
              <svg width="7" height="4" viewBox="0 0 7 4"><path d="M0 4l3.500-4L7 4z" fill="#666" /></svg>
            </ScrollCap>
            <ScrollThumb />
            <ScrollTrack />
            <ScrollCap>
              <svg width="7" height="4" viewBox="0 0 7 4"><path d="M0 0l3.500 4L7 0z" fill="#666" /></svg>
            </ScrollCap>
          </VScroll>
        </SheetRow>

        <TabStrip>
          <SheetNav>
            <NavArrow $dir="left" />
            <NavArrow $dir="right" />
          </SheetNav>
          <SheetTab $w={58} $active>投票率</SheetTab>
          <SheetTab $w={71}>開票結果</SheetTab>
          <AddSheet><CirclePlus size={17} strokeWidth={1.2} /></AddSheet>
          <HScrollArea>
            <HGrip />
            <HCap>
              <svg width="4" height="7" viewBox="0 0 4 7"><path d="M4 0L0 3.500 4 7z" fill="#666" /></svg>
            </HCap>
            <HThumb />
            <HTrack />
            <HCap>
              <svg width="4" height="7" viewBox="0 0 4 7"><path d="M0 0l4 3.500L0 7z" fill="#666" /></svg>
            </HCap>
          </HScrollArea>
        </TabStrip>

        <StatusBar>
          <StatusText>準備完了</StatusText>
          <svg width="13" height="12" viewBox="0 0 13 12">
            <path d="M.5 3.500h12v8H.5z" fill="none" stroke="#777" />
            <path d="M2 1h3v3H2zM3 6h8M3 8h8M3 10h8" fill="#666" stroke="#666" strokeDasharray="1.500 1" />
          </svg>
          <ViewButton $on $first>
            <svg width="14" height="12" viewBox="0 0 14 12">
              <path d="M.5.5h13v11H.5zM.5 4h13M.5 8h13M5 .5v11M9.500.5v11" fill="none" stroke="#666" />
            </svg>
          </ViewButton>
          <ViewButton>
            <svg width="13" height="13" viewBox="0 0 13 13">
              <path d="M.5.5h12v12H.5zM3 3.500h7M3 6.500h7M3 9.500h7" fill="none" stroke="#777" />
            </svg>
          </ViewButton>
          <ViewButton>
            <svg width="13" height="12" viewBox="0 0 13 12">
              <path d="M.5 0v11.500h12V0M4.500 0v6h4V0" fill="none" stroke="#777" />
            </svg>
          </ViewButton>
          <Zoomer>
            −
            <ZoomLine />
            +
          </Zoomer>
          <ZoomValue>100%</ZoomValue>
        </StatusBar>

        <Tooltip>
          {TOOLTIP_PATH}
          <TooltipKana>{TOOLTIP_HINT}</TooltipKana>
        </Tooltip>

        {/* window coordinates: the drag cursor on L8 and the blue call-out arrow */}
        <Overlay width="864" height="705" viewBox="0 0 864 705">
          <path d="M779 350h12M785 344v12" stroke="#111" strokeWidth="1.200" />
          <path d="M785 341l-2.500 3h5zM785 359l-2.500-3h5zM776 350l3-2.500v5zM794 350l-3-2.500v5z" fill="#111" />
          <path d="M786 351v12l3-2.500 2 4.500 2-1-2-4.500h4z" fill="#fff" stroke="#222" strokeWidth=".9" />
          <path d="M722 588l25 5-7 8 60 49-67-40-1 10z" fill="#3b8fe0" />
        </Overlay>
      </Excel>
    </>
  );
}
